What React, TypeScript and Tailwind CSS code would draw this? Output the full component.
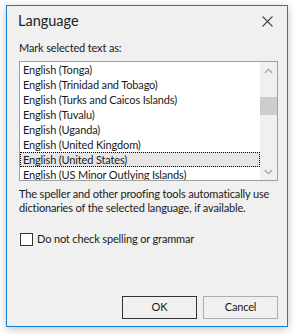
import React from 'react';

const languages = [
  'English (Tonga)',
  'English (Trinidad and Tobago)',
  'English (Turks and Caicos Islands)',
  'English (Tuvalu)',
  'English (Uganda)',
  'English (United Kingdom)',
  'English (United States)',
  'English (US Minor Outlying Islands)',
];

const selected = 'English (United States)';

const App = () => {
  return (
    <div
      className="w-[298px] h-[335px] bg-white pt-[5px] pl-[6px] text-[#1a1a1a] tracking-[-0.15px]"
      style={{ fontFamily: '"Segoe UI", Lato, sans-serif' }}
    >
      <div className="w-[282px] h-[322px] bg-[#f0f0f0] border border-[#1a7ad4] shadow-[0_2px_8px_rgba(0,0,0,0.25)] flex flex-col">
        {/* title bar */}
        <div className="flex items-center justify-between h-[29px] pt-[1px] pl-[11px] pr-[14px]">
          <span className="text-[14.5px] text-[#222] tracking-normal">Language</span>
          <svg width="11" height="11" viewBox="0 0 11 11" className="text-[#444]">
            <path d="M0.5 0.5 L10.5 10.5 M10.5 0.5 L0.5 10.5" stroke="currentColor" strokeWidth="1.1" fill="none" />
          </svg>
        </div>

        <div className="pl-[12px] pr-[9px] pt-[5px] flex flex-col flex-1 text-[11px]">
          <div className="leading-[15px]">Mark selected text as:</div>

          {/* listbox */}
          <div className="mt-[6px] h-[120px] border border-[#a0a0a0] bg-white flex">
            <div className="flex-1 overflow-hidden">
              {languages.map((lang) => (
                <div
                  key={lang}
                  className={
                    lang === selected
                      ? 'h-[15px] leading-[13px] pl-[2px] bg-[#e5e5e5] border border-dotted border-black whitespace-nowrap'
                      : 'h-[15px] leading-[15px] pl-[3px] whitespace-nowrap'
                  }
                >
                  {lang}
                </div>
              ))}
            </div>
            {/* scrollbar */}
            <div className="w-[17px] bg-[#f0f0f0] flex flex-col items-center">
              <div className="h-[17px] flex items-center justify-center">
                <svg width="9" height="6" viewBox="0 0 9 6">
                  <path d="M0.8 5 L4.5 1.3 L8.2 5" stroke="#a3a3a3" strokeWidth="1.3" fill="none" />
                </svg>
              </div>
              <div className="mt-[18px] h-[18px] w-[17px] bg-[#cdcdcd]" />
              <div className="flex-1" />
              <div className="h-[17px] flex items-center justify-center">
                <svg width="9" height="6" viewBox="0 0 9 6">
                  <path d="M0.8 1 L4.5 4.7 L8.2 1" stroke="#a3a3a3" strokeWidth="1.3" fill="none" />
                </svg>
              </div>
            </div>
          </div>

          <div className="mt-[6px] leading-[14px]">
            The speller and other proofing tools automatically use dictionaries of the selected language, if available.
          </div>

          <label className="mt-[16px] flex items-center gap-[4px]">
            <span className="w-[13px] h-[13px] border border-[#333] bg-white ml-[1px]" />
            <span>Do not check spelling or grammar</span>
          </label>

          <div className="flex-1" />

          <div className="flex justify-end gap-[6px] pb-[7px]">
            <button className="w-[75px] h-[23px] border border-[#333] bg-[#f0f0f0]">OK</button>
            <button className="w-[75px] h-[23px] border border-[#adadad] bg-[#f0f0f0]">Cancel</button>
          </div>
        </div>
      </div>
    </div>
  );
};

export default App;
